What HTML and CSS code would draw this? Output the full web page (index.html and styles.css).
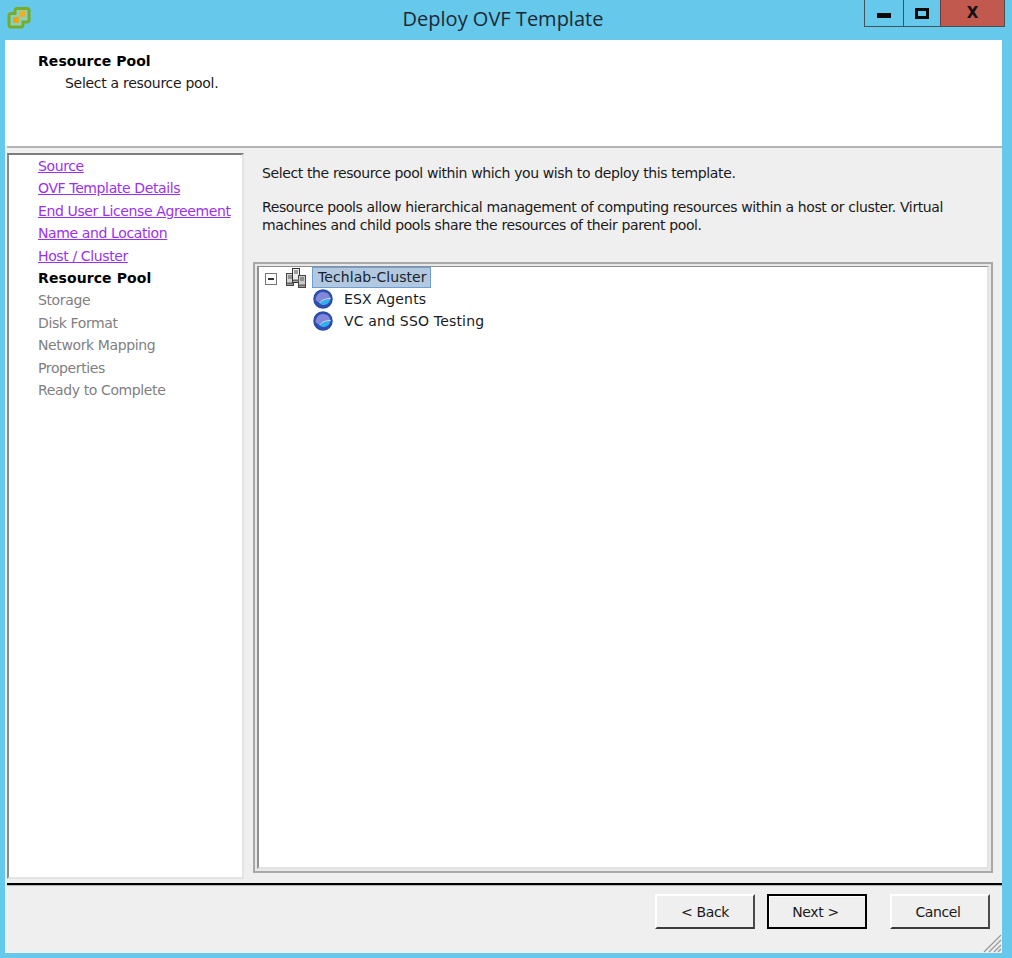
FILE: index.html
```html
<!DOCTYPE html>
<html lang="en">
<head>
<meta charset="utf-8">
<title>Deploy OVF Template</title>
<link rel="stylesheet" href="styles.css">
</head>
<body>
<div class="window">
  <header class="titlebar">
    <svg class="app-icon" width="24" height="24" viewBox="0 0 24 24">
      <path d="M10 3.500H20a2 2 0 0 1 2 2V15a2 2 0 0 1-2 2H16v3a2 2 0 0 1-2 2H4a2 2 0 0 1-2-2V10.500a2 2 0 0 1 2-2H8v-3a2 2 0 0 1 2-2z" fill="#86d0c4" stroke="#76ad26" stroke-width="3"/>
      <path d="M6 12h6v6H6z" fill="#eda316"/>
      <path d="M12 6h6v6h-6z" fill="#f2b01e"/>
    </svg>
    <h1 class="title">Deploy OVF Template</h1>
    <div class="controls">
      <div class="ctl ctl-min"><span class="glyph-min"></span></div>
      <div class="ctl ctl-max"><span class="glyph-max"></span></div>
      <div class="ctl ctl-close">X</div>
    </div>
  </header>
  <div class="client">
    <section class="head">
      <div class="head-title">Resource Pool</div>
      <div class="head-sub">Select a resource pool.</div>
    </section>
    <div class="body">
      <nav class="steps">
        <a class="step link">Source</a>
        <a class="step link">OVF Template Details</a>
        <a class="step link">End User License Agreement</a>
        <a class="step link">Name and Location</a>
        <a class="step link">Host / Cluster</a>
        <div class="step current">Resource Pool</div>
        <div class="step off">Storage</div>
        <div class="step off">Disk Format</div>
        <div class="step off">Network Mapping</div>
        <div class="step off">Properties</div>
        <div class="step off">Ready to Complete</div>
      </nav>
      <main class="pane">
        <p class="lead">Select the resource pool within which you wish to deploy this template.</p>
        <p class="desc">Resource pools allow hierarchical management of computing resources within a host or cluster. Virtual machines and child pools share the resources of their parent pool.</p>
        <div class="tree">
          <div class="tree-inner">
            <div class="row row-root">
              <span class="expander"></span>
              <svg class="cluster-icon" width="20" height="20" viewBox="0 0 20 20">
                <rect x="0.500" y="5.500" width="7" height="12" fill="#d6d6d6" stroke="#444"/>
                <rect x="6.500" y="0.500" width="7" height="14" fill="#ececec" stroke="#333"/>
                <rect x="12.500" y="7.500" width="7" height="12" fill="#c8c8c8" stroke="#444"/>
                <path d="M2 8h4M2 10h4M8 3h4M8 5h4M14 10h4M14 12h4" stroke="#555" fill="none"/>
                <path d="M1 15.500h6M7 12.500h6M13 17.500h6" stroke="#666" stroke-width="2" fill="none"/>
              </svg>
              <span class="node-selected">Techlab-Cluster</span>
            </div>
            <div class="row row-child">
              <svg class="pool-icon" width="20" height="20" viewBox="0 0 20 20">
                <circle cx="10" cy="10" r="9" fill="#2f50b4" stroke="#2a4aa6" stroke-width="1.500"/>
                <path d="M2.500 11C3 6 6 3 10 3s6.500 2 7.500 6C13 9 9 10 6.500 13.500 5 13 3.500 12 2.500 11z" fill="#8287dc"/>
                <path d="M6.500 14C9 10.500 13 9.500 17.500 9.500 17 13 14.500 15.500 11 16c-2 0-3.500-.5-4.500-2z" fill="#35aeee"/>
                <path d="M6.500 14C9 10.500 13 9.500 17.500 9.500" stroke="#dfe8ff" fill="none"/>
              </svg>
              <span class="node">ESX Agents</span>
            </div>
            <div class="row row-child">
              <svg class="pool-icon" width="20" height="20" viewBox="0 0 20 20">
                <circle cx="10" cy="10" r="9" fill="#2f50b4" stroke="#2a4aa6" stroke-width="1.500"/>
                <path d="M2.500 11C3 6 6 3 10 3s6.500 2 7.500 6C13 9 9 10 6.500 13.500 5 13 3.500 12 2.500 11z" fill="#8287dc"/>
                <path d="M6.500 14C9 10.500 13 9.500 17.500 9.500 17 13 14.500 15.500 11 16c-2 0-3.500-.5-4.500-2z" fill="#35aeee"/>
                <path d="M6.500 14C9 10.500 13 9.500 17.500 9.500" stroke="#dfe8ff" fill="none"/>
              </svg>
              <span class="node">VC and SSO Testing</span>
            </div>
          </div>
        </div>
      </main>
    </div>
    <footer class="foot">
      <button class="btn btn-back">&lt; Back</button>
      <button class="btn btn-next">Next &gt;</button>
      <button class="btn btn-cancel">Cancel</button>
      <svg class="grip" width="20" height="20" viewBox="0 0 20 20">
        <path d="M19 2 2 19M19 7 7 19M19 12l-7 7M19 16l-3 3" stroke="#9a9a9a" stroke-width="1.300" fill="none"/>
      </svg>
    </footer>
  </div>
</div>
</body>
</html>
```

FILE: styles.css
```css
* { box-sizing: border-box; }
html, body { margin: 0; height: 100%; }
body { background: #66c8ea; overflow: hidden; }
.window {
  width: 1012px;
  height: 958px;
  display: flex;
  flex-direction: column;
  font-family: "DejaVu Sans", sans-serif;
  font-size: 14px;
  letter-spacing: -0.38px;
  color: #1a1a1a;
}
.titlebar {
  height: 40px;
  flex: none;
  display: flex;
  position: relative;
  justify-content: center;
}
.app-icon { position: absolute; left: 7px; top: 5px; }
.title {
  margin: 0 6px 0 0;
  font: 400 20px/38px "Open Sans", sans-serif;
  letter-spacing: 0;
  color: #1c2a33;
}
.controls {
  position: absolute;
  left: 864px;
  top: 0;
  width: 141px;
  height: 27px;
  display: flex;
  border: 1px solid #44525a;
  border-top: 0;
}
.ctl { height: 100%; display: flex; align-items: center; justify-content: center; }
.ctl-min { width: 39px; border-right: 1px solid #44525a; padding-top: 4px; }
.ctl-max { width: 36px; }
.ctl-close {
  flex: 1;
  background: #c1594f;
  border-left: 1px solid #6c3a36;
  font: 700 15px/1 "DejaVu Sans", sans-serif;
  letter-spacing: 0;
  color: #111;
}
.glyph-min { width: 14px; height: 5px; background: #0a0a0a; }
.glyph-max { width: 14px; height: 11px; border: 3px solid #0a0a0a; }
.client {
  flex: 1;
  margin: 0 10px 5px 5px;
  background: #efefef;
  display: flex;
  flex-direction: column;
}
.head {
  height: 106px;
  flex: none;
  background: #fff;
  padding: 10px 0 0 33px;
  line-height: 22px;
}
.head-title { font-weight: 700; color: #000; letter-spacing: 0.05px; }
.head-sub { padding-left: 27px; letter-spacing: -0.29px; }
.body {
  flex: 1;
  display: flex;
  border-top: 2px solid #b4b4b4;
  margin-left: 2px;
  padding-top: 5px;
  min-height: 0;
}
.steps {
  width: 237px;
  height: 726px;
  flex: none;
  background: #fff;
  border-top: 2px solid #7d7d7d;
  border-left: 2px solid #8a8a8a;
  border-right: 2px solid #e4e4e4;
  border-bottom: 2px solid #e4e4e4;
  padding-left: 29px;
  display: flex;
  flex-direction: column;
}
.step { height: 22.400px; line-height: 22.400px; white-space: nowrap; }
.link { color: #9b30f0; text-decoration: underline; }
.current { font-weight: 700; color: #000; letter-spacing: 0.1px; }
.off { color: #7f7f7f; }
.pane { flex: 1; padding-left: 9px; display: flex; flex-direction: column; min-width: 0; }
.lead { margin: 10px 0 0 9px; line-height: 20px; }
.desc { margin: 15px 40px 0 9px; line-height: 18px; height: 36px; }
.tree {
  width: 740px;
  height: 611px;
  margin-top: 28px;
  background: #e8e8e8;
  border: 2px solid #a8a8a8;
  padding: 2px;
}
.tree-inner {
  height: 100%;
  background: #fff;
  border-style: solid;
  border-width: 1px 2px 2px 2px;
  border-color: #8f8f8f #e2e2e2 #e2e2e2 #8f8f8f;
  padding-left: 6px;
}
.row { height: 22.400px; display: flex; align-items: center; }
.row-root { margin-top: -1px; margin-bottom: -0.500px; }
.expander {
  width: 12px;
  height: 12px;
  border: 1px solid #777;
  margin-top: 4px;
  position: relative;
  flex: none;
}
.expander::after {
  content: "";
  position: absolute;
  left: 2px;
  right: 2px;
  top: 4px;
  height: 2px;
  background: #333;
}
.cluster-icon { margin: 2px 0 0 9px; flex: none; }
.node-selected {
  margin-left: 6px;
  width: 119px;
  height: 21px;
  padding-left: 5px;
  line-height: 19px;
  background: #b2c8e0;
  border: 1px solid #6e9fd0;
  color: #17222c;
  letter-spacing: 0.08px;
}
.row-child { padding-left: 48px; }
.node { margin-left: 11px; letter-spacing: 0.18px; }
.foot {
  height: 70px;
  flex: none;
  margin-left: 2px;
  border-top: 2px solid #000;
  box-shadow: inset 0 1px 0 #b5b5b5;
  display: flex;
  padding: 9px 0 0 648px;
  position: relative;
}
.btn {
  width: 100px;
  height: 35px;
  background: #efefef;
  border: 2px solid;
  border-color: #fff #4a4a4a #3a3a3a #fff;
  font: inherit;
  letter-spacing: inherit;
  color: #1a1a1a;
  padding: 0;
}
.btn-next { margin-left: 12px; border-color: #000; box-shadow: inset 1px 1px 0 #fff; padding-right: 3px; }
.btn-cancel { margin-left: 23px; padding-right: 4px; }
.grip { position: absolute; right: 0; bottom: 0; }
```
